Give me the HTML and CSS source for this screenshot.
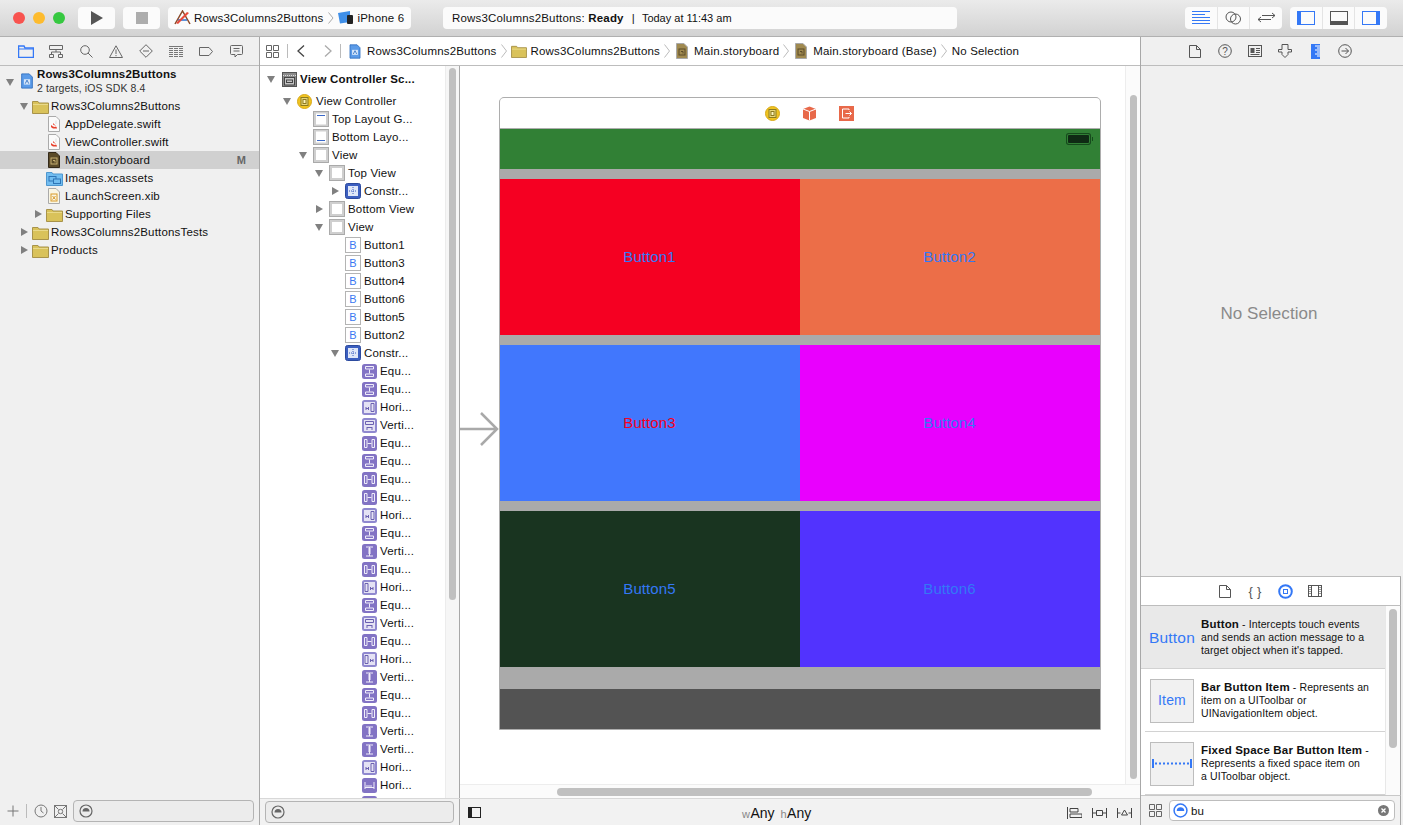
FILE: index.html
```html
<!DOCTYPE html>
<html lang="en">
<head>
    <meta charset="UTF-8" />
    <meta name="viewport" content="width=device-width, initial-scale=1.0" />
    <title>Rows3Columns2Buttons — Main.storyboard</title>
    <link rel="stylesheet" href="styles.css">
</head>
<body>
    <svg class="sprites" aria-hidden="true">
        <symbol id="i-proj" viewBox="0 0 14 18"><path d="M1 1h8.500l3.500 3.500v12.500h-12z" fill="#5b9be8" stroke="#2f6fc0"/><rect x="3.500" y="7" width="7" height="6" fill="#d7e7fa"/><path d="M5 12l2-4 2 4" fill="none" stroke="#2f6fc0"/></symbol>
        <symbol id="i-folder" viewBox="0 0 17 15"><path d="M.5 2.500h5.500l1 1.500h9.500v10.500h-16z" fill="#d9c25a" stroke="#a8934a"/><path d="M1 5.500h15" stroke="#e9d98a"/></symbol>
        <symbol id="i-swift" viewBox="0 0 12 16"><path d="M.5.500h7.500l3.500 3.500v11.500h-11z" fill="#fafafa" stroke="#aaa"/><path d="M8 4.500v3.500" stroke="#ddd"/><path d="M3 9c2 2 4 2.500 5 1.500 1 1 1 1.500 1 2-1-.5-4 1-6-1.500z" fill="#e8402c"/><path d="M5 7l3 3-3-1.500z" fill="#e8402c"/></symbol>
        <symbol id="i-story" viewBox="0 0 12 16"><path d="M.5.500h7.500l3.500 3.500v11.500h-11z" fill="#5a4a28" stroke="#33291a"/><rect x="3" y="6" width="6" height="6" fill="none" stroke="#c8b070"/><path d="M5 8.500h2v2" fill="none" stroke="#c8b070"/></symbol>
        <symbol id="i-story-lt" viewBox="0 0 12 16"><path d="M.5.500h7.500l3.500 3.500v11.500h-11z" fill="#a08a50" stroke="#a9a9a9"/><rect x="3" y="6" width="6" height="6" fill="none" stroke="#5a4a28"/><path d="M5 8.500h2v2" fill="none" stroke="#5a4a28"/></symbol>
        <symbol id="i-assets" viewBox="0 0 17 15"><path d="M.5 1.500h5.500l1 1.500h9.500v11.500h-16z" fill="#72bdf0" stroke="#4f97cf"/><rect x="3" y="5.500" width="7" height="4.500" fill="none" stroke="#2e75b6"/><rect x="7.500" y="8" width="7" height="4.500" fill="#72bdf0" stroke="#2e75b6"/></symbol>
        <symbol id="i-xib" viewBox="0 0 12 16"><path d="M.5.500h7.500l3.500 3.500v11.500h-11z" fill="#faf6e4" stroke="#aaa"/><rect x="3" y="6" width="6" height="7" fill="none" stroke="#d89a28"/><path d="M4.500 8l3 3.500m0-3.500l-3 3.500" stroke="#d89a28"/></symbol>
        <symbol id="i-scene" viewBox="0 0 15 15"><rect x=".5" y=".5" width="14" height="14" fill="#8a8a8a" stroke="#555"/><path d="M1 3.500h13" stroke="#ddd" stroke-dasharray="1 1"/><rect x="2.500" y="5.500" width="10" height="7.500" fill="#c4c4c4" stroke="#444"/><rect x="4.500" y="8" width="6" height="2.500" fill="none" stroke="#444"/></symbol>
        <symbol id="i-vc" viewBox="0 0 15 15"><circle cx="7.500" cy="7.500" r="7" fill="#f0c421" stroke="#d8a818"/><rect x="4" y="3.500" width="7" height="8" fill="#e8d67a" stroke="#8c7a20"/><rect x="6" y="5.500" width="3" height="4" fill="#fff6c0" stroke="#8c7a20"/></symbol>
        <symbol id="i-top" viewBox="0 0 16 16"><rect x=".5" y=".5" width="15" height="15" fill="#cfcfcf" stroke="#aaa"/><rect x="3" y="2.500" width="10" height="11" fill="#fff"/><path d="M4 4.500h8" stroke="#3a68c8"/></symbol>
        <symbol id="i-bottom" viewBox="0 0 16 16"><rect x=".5" y=".5" width="15" height="15" fill="#cfcfcf" stroke="#aaa"/><rect x="3" y="2.500" width="10" height="11" fill="#fff"/><path d="M4 11.500h8" stroke="#3a68c8"/></symbol>
        <symbol id="i-view" viewBox="0 0 16 16"><rect x=".5" y=".5" width="15" height="15" fill="#cfcfcf" stroke="#aaa"/><rect x="3" y="3" width="10" height="10" fill="#fff"/></symbol>
        <symbol id="i-constr" viewBox="0 0 16 16"><rect x=".5" y=".5" width="15" height="15" rx="2" fill="#3c5fc0" stroke="#2c4a9e"/><rect x="3" y="3" width="10" height="10" fill="#dfe7f8"/><path d="M8 4v8M4 8h8" stroke="#3c5fc0" stroke-dasharray="1 1"/></symbol>
        <symbol id="i-btn" viewBox="0 0 16 16"><rect x=".5" y=".5" width="15" height="15" fill="#fff" stroke="#b4b4b4"/><text x="8" y="12" text-anchor="middle" font-size="11" font-family="Liberation Sans" fill="#3a78f2">B</text></symbol>
        <symbol id="c-eqv" viewBox="0 0 15 15"><rect width="15" height="15" rx="2.500" fill="#8273c4"/><path d="M3.500 2.500h8v2.500h-8zM3.500 10h8v2.500h-8z" fill="none" stroke="#f0eefa"/><path d="M7.500 5.500v4" stroke="#f0eefa"/></symbol>
        <symbol id="c-eqh" viewBox="0 0 15 15"><rect width="15" height="15" rx="2.500" fill="#8273c4"/><path d="M2.500 3.500h2.500v8h-2.500zM10 3.500h2.500v8h-2.500z" fill="none" stroke="#f0eefa"/><path d="M5.500 7.500h4" stroke="#f0eefa"/></symbol>
        <symbol id="c-hori" viewBox="0 0 15 15"><rect width="15" height="15" rx="2.500" fill="#8f88cf"/><rect x="2" y="2" width="11" height="11" fill="#e4e2f4"/><path d="M9 3.500h3v8h-3zM4 7v3M6.500 7v3M4 8.500h3" fill="none" stroke="#6a60b0"/></symbol>
        <symbol id="c-hori2" viewBox="0 0 15 15"><rect width="15" height="15" rx="2.500" fill="#8f88cf"/><rect x="2" y="2" width="11" height="11" fill="#e4e2f4"/><path d="M3 3.500h3v8h-3zM8.500 7v3M11 7v3M8 8.500h3" fill="none" stroke="#6a60b0"/></symbol>
        <symbol id="c-vert" viewBox="0 0 15 15"><rect width="15" height="15" rx="2.500" fill="#8f88cf"/><rect x="2" y="2" width="11" height="11" fill="#e4e2f4"/><path d="M3.500 3.500h8v3h-8zM5 9v3M10 9v3M5 9.500h5" fill="none" stroke="#6a60b0"/></symbol>
        <symbol id="c-vbar" viewBox="0 0 15 15"><rect width="15" height="15" rx="2.500" fill="#8273c4"/><path d="M4 3h7M4 12h7M7.500 3v9M6 5h3M6 7h3M6 9h3" stroke="#f0eefa"/></symbol>
        <symbol id="c-hbar" viewBox="0 0 15 15"><rect width="15" height="15" rx="2.500" fill="#8273c4"/><path d="M3 4v7M12 4v7M3 9.500h9M5 7v2M7 7v2M9 7v2" fill="none" stroke="#f0eefa"/></symbol>
        <symbol id="i-filter" viewBox="0 0 14 14"><circle cx="7" cy="7" r="6" fill="none" stroke="#666" stroke-width="1.200"/><path d="M3.500 7.500a3.500 3.500 0 0 1 7 0z" fill="#666"/></symbol>
    </svg>

    <header class="toolbar">
        <span class="light red"></span>
        <span class="light yellow"></span>
        <span class="light green"></span>
        <button class="tb-btn play"><svg width="12" height="14" viewBox="0 0 12 14"><path d="M0 0l12 7-12 7z" fill="#555"/></svg></button>
        <button class="tb-btn stop"><span class="stop-sq"></span></button>
        <div class="scheme">
            <svg class="app-icon" width="17" height="15" viewBox="0 0 17 15"><path d="M1 14L8.500 1 16 14" fill="none" stroke="#8a4a2a" stroke-width="1.500"/><path d="M4 10h9" stroke="#2b6fd0" stroke-width="1.500"/><path d="M2 13l11-11 2 1-11 11z" fill="#e84a3a"/></svg>
            <span>Rows3Columns2Buttons</span>
            <svg class="scheme-chev" width="6" height="12" viewBox="0 0 6 12"><path d="M.5.500l4.500 5.500-4.500 5.500" fill="none" stroke="#aaa"/></svg>
            <svg class="sim-icon" width="16" height="13" viewBox="0 0 16 13"><path d="M0 2l12-2v11l-10 1.500z" fill="#3f8fe8"/><rect x="9" y="4" width="6" height="9" rx="1" fill="#222"/></svg>
            <span>iPhone 6</span>
        </div>
        <div class="activity">
            <span>Rows3Columns2Buttons: <b>Ready</b></span>
            <span class="pipe">|</span>
            <span class="when">Today at 11:43 am</span>
        </div>
        <div class="seg editors">
            <button class="seg-btn"><svg width="18" height="13" viewBox="0 0 18 13"><path d="M0 .5h18M0 3.500h13M0 6.500h18M0 9.500h18M0 12.500h18" stroke="#3478f6"/></svg></button>
            <button class="seg-btn"><svg width="17" height="14" viewBox="0 0 17 14"><circle cx="6" cy="6" r="5" fill="none" stroke="#555"/><circle cx="10.500" cy="8" r="5" fill="none" stroke="#555"/></svg></button>
            <button class="seg-btn"><svg width="19" height="13" viewBox="0 0 19 13"><path d="M5 4.500h13M15 2l3 2.500-3 2.500M14 8.500h-13M4 6l-3 2.500 3 2.500" fill="none" stroke="#555"/></svg></button>
        </div>
        <div class="seg panes">
            <button class="seg-btn"><svg width="18" height="14" viewBox="0 0 18 14"><rect x=".5" y=".5" width="17" height="13" fill="none" stroke="#3478f6"/><rect x="1" y="1" width="3" height="12" fill="#3478f6"/></svg></button>
            <button class="seg-btn"><svg width="18" height="14" viewBox="0 0 18 14"><rect x=".5" y=".5" width="17" height="13" fill="none" stroke="#555"/><rect x="1" y="10" width="16" height="3" fill="#555"/></svg></button>
            <button class="seg-btn"><svg width="18" height="14" viewBox="0 0 18 14"><rect x=".5" y=".5" width="17" height="13" fill="none" stroke="#3478f6"/><rect x="14" y="1" width="3" height="12" fill="#3478f6"/></svg></button>
        </div>
    </header>

    <div class="workspace">
        <aside class="navigator">
            <div class="tabbar nav-tabs">
                <svg width="16" height="13" viewBox="0 0 16 13"><path d="M.5 1h5.500l1 2h8.500v9.500h-15z" fill="none" stroke="#3478f6" stroke-width="1.500"/><path d="M1 4h14" stroke="#3478f6"/></svg>
                <svg width="14" height="13" viewBox="0 0 14 13"><path d="M.5.500h13v4h-13zM.5 9.500h4v3h-4zM9.500 9.500h4v3h-4zM2.500 9.500v-2.500h9v2.500M7 4.500v2.500" fill="none" stroke="#666"/></svg>
                <svg width="13" height="13" viewBox="0 0 13 13"><circle cx="5" cy="5" r="4.300" fill="none" stroke="#666"/><path d="M8 8l4.500 4.500" stroke="#666"/></svg>
                <svg width="14" height="13" viewBox="0 0 14 13"><path d="M7 .8l6.500 11.700h-13z" fill="none" stroke="#666"/><path d="M7 4.500v4.500M7 10v1.200" stroke="#666"/></svg>
                <svg width="14" height="14" viewBox="0 0 14 14"><path d="M7 .7l6.300 6.300-6.300 6.300-6.300-6.300zM4 7h6" fill="none" stroke="#666"/></svg>
                <svg width="14" height="11" viewBox="0 0 14 11"><path d="M0 .5h14M0 2.500h14M0 4.500h14M0 6.500h14M0 8.500h14M0 10.500h14" stroke="#777"/><path d="M4.500 2v9M9.500 2v9" stroke="#f0f0f0"/></svg>
                <svg width="14" height="9" viewBox="0 0 14 9"><path d="M.5.500h9.500l3.500 4-3.500 4h-9.500z" fill="none" stroke="#666"/></svg>
                <svg width="13" height="13" viewBox="0 0 13 13"><path d="M1.500.5h10a1 1 0 0 1 1 1v7a1 1 0 0 1-1 1h-4l-2.500 2.500v-2.500h-3.500a1 1 0 0 1-1-1v-7a1 1 0 0 1 1-1zM3.500 3.500h6M3.500 6h6" fill="none" stroke="#666"/></svg>
            </div>
            <div class="file-tree">
                <div class="file-row root">
                    <span class="twist open"></span>
                    <svg class="root-icon"><use href="#i-proj"/></svg>
                    <div class="root-label"><b>Rows3Columns2Buttons</b><span>2 targets, iOS SDK 8.4</span></div>
                </div>
                <div class="file-row lv1"><span class="twist open"></span><svg class="ficon folder"><use href="#i-folder"/></svg>Rows3Columns2Buttons</div>
                <div class="file-row lv2"><span class="twist"></span><svg class="ficon leaf"><use href="#i-swift"/></svg>AppDelegate.swift</div>
                <div class="file-row lv2"><span class="twist"></span><svg class="ficon leaf"><use href="#i-swift"/></svg>ViewController.swift</div>
                <div class="file-row lv2 selected"><span class="twist"></span><svg class="ficon leaf"><use href="#i-story"/></svg>Main.storyboard<span class="badge">M</span></div>
                <div class="file-row lv2"><span class="twist"></span><svg class="ficon folder"><use href="#i-assets"/></svg>Images.xcassets</div>
                <div class="file-row lv2"><span class="twist"></span><svg class="ficon leaf"><use href="#i-xib"/></svg>LaunchScreen.xib</div>
                <div class="file-row lv2"><span class="twist shut"></span><svg class="ficon folder"><use href="#i-folder"/></svg>Supporting Files</div>
                <div class="file-row lv1"><span class="twist shut"></span><svg class="ficon folder"><use href="#i-folder"/></svg>Rows3Columns2ButtonsTests</div>
                <div class="file-row lv1"><span class="twist shut"></span><svg class="ficon folder"><use href="#i-folder"/></svg>Products</div>
            </div>
            <div class="filter-bar nav-filter">
                <svg width="12" height="12" viewBox="0 0 12 12"><path d="M6 .5v11M.5 6h11" stroke="#777"/></svg>
                <span class="vsep"></span>
                <svg width="14" height="14" viewBox="0 0 14 14"><circle cx="7" cy="7" r="6" fill="none" stroke="#777"/><path d="M7 3v4l2.500 2" fill="none" stroke="#777"/></svg>
                <svg class="recent" width="13" height="13" viewBox="0 0 13 13"><rect x=".5" y=".5" width="12" height="12" fill="none" stroke="#777"/><path d="M1 1l3.500 3.500M12 1l-3.500 3.500M1 12l3.500-3.500M12 12l-3.500-3.500" stroke="#777"/><circle cx="6.500" cy="6.500" r="2.200" fill="none" stroke="#777"/></svg>
                <div class="filter-field"><svg width="14" height="14"><use href="#i-filter"/></svg></div>
            </div>
        </aside>

        <section class="editor">
            <div class="jumpbar">
                <svg class="jb-grid" width="13" height="13" viewBox="0 0 13 13"><path d="M.5.500h5v5h-5zM7.500.500h5v5h-5zM.5 7.500h5v5h-5zM7.500 7.500h5v5h-5z" fill="none" stroke="#666"/></svg>
                <span class="vsep"></span>
                <svg class="jb-back" width="8" height="12" viewBox="0 0 8 12"><path d="M7 .5l-6 5.500 6 5.500" fill="none" stroke="#444" stroke-width="1.300"/></svg>
                <svg class="jb-fwd" width="8" height="12" viewBox="0 0 8 12"><path d="M1 .5l6 5.500-6 5.500" fill="none" stroke="#aaa" stroke-width="1.300"/></svg>
                <span class="vsep"></span>
                <svg class="crumb-icon doc" width="12" height="15"><use href="#i-proj"/></svg>
                <span>Rows3Columns2Buttons</span>
                <svg class="chev" width="6" height="14" viewBox="0 0 6 14"><path d="M.5.500l5 6.500-5 6.500" fill="none" stroke="#bbb"/></svg>
                <svg class="crumb-icon fold" width="16" height="14"><use href="#i-folder"/></svg>
                <span>Rows3Columns2Buttons</span>
                <svg class="chev" width="6" height="14" viewBox="0 0 6 14"><path d="M.5.500l5 6.500-5 6.500" fill="none" stroke="#bbb"/></svg>
                <svg class="crumb-icon" width="12" height="16"><use href="#i-story-lt"/></svg>
                <span>Main.storyboard</span>
                <svg class="chev" width="6" height="14" viewBox="0 0 6 14"><path d="M.5.500l5 6.500-5 6.500" fill="none" stroke="#bbb"/></svg>
                <svg class="crumb-icon" width="12" height="16"><use href="#i-story-lt"/></svg>
                <span>Main.storyboard (Base)</span>
                <svg class="chev" width="6" height="14" viewBox="0 0 6 14"><path d="M.5.500l5 6.500-5 6.500" fill="none" stroke="#bbb"/></svg>
                <span class="last-crumb">No Selection</span>
            </div>
            <div class="editor-body">
                <div class="outline">
                    <div class="outline-list">
                        <div class="o-row scene ol0"><span class="twist open"></span><svg class="oicon"><use href="#i-scene"/></svg><b>View Controller Sc...</b></div>
                        <div class="o-row ol1"><span class="twist open"></span><svg class="oicon"><use href="#i-vc"/></svg>View Controller</div>
                        <div class="o-row ol2"><span class="twist"></span><svg class="oicon"><use href="#i-top"/></svg>Top Layout G...</div>
                        <div class="o-row ol2"><span class="twist"></span><svg class="oicon"><use href="#i-bottom"/></svg>Bottom Layo...</div>
                        <div class="o-row ol2"><span class="twist open"></span><svg class="oicon"><use href="#i-view"/></svg>View</div>
                        <div class="o-row ol3"><span class="twist open"></span><svg class="oicon"><use href="#i-view"/></svg>Top View</div>
                        <div class="o-row ol4"><span class="twist shut"></span><svg class="oicon"><use href="#i-constr"/></svg>Constr...</div>
                        <div class="o-row ol3"><span class="twist shut"></span><svg class="oicon"><use href="#i-view"/></svg>Bottom View</div>
                        <div class="o-row ol3"><span class="twist open"></span><svg class="oicon"><use href="#i-view"/></svg>View</div>
                        <div class="o-row ol4"><span class="twist"></span><svg class="oicon"><use href="#i-btn"/></svg>Button1</div>
                        <div class="o-row ol4"><span class="twist"></span><svg class="oicon"><use href="#i-btn"/></svg>Button3</div>
                        <div class="o-row ol4"><span class="twist"></span><svg class="oicon"><use href="#i-btn"/></svg>Button4</div>
                        <div class="o-row ol4"><span class="twist"></span><svg class="oicon"><use href="#i-btn"/></svg>Button6</div>
                        <div class="o-row ol4"><span class="twist"></span><svg class="oicon"><use href="#i-btn"/></svg>Button5</div>
                        <div class="o-row ol4"><span class="twist"></span><svg class="oicon"><use href="#i-btn"/></svg>Button2</div>
                        <div class="o-row ol4"><span class="twist open"></span><svg class="oicon"><use href="#i-constr"/></svg>Constr...</div>
                        <div class="o-row ol5"><svg class="oicon"><use href="#c-eqv"/></svg>Equ...</div>
                        <div class="o-row ol5"><svg class="oicon"><use href="#c-eqv"/></svg>Equ...</div>
                        <div class="o-row ol5"><svg class="oicon"><use href="#c-hori"/></svg>Hori...</div>
                        <div class="o-row ol5"><svg class="oicon"><use href="#c-vert"/></svg>Verti...</div>
                        <div class="o-row ol5"><svg class="oicon"><use href="#c-eqh"/></svg>Equ...</div>
                        <div class="o-row ol5"><svg class="oicon"><use href="#c-eqv"/></svg>Equ...</div>
                        <div class="o-row ol5"><svg class="oicon"><use href="#c-eqh"/></svg>Equ...</div>
                        <div class="o-row ol5"><svg class="oicon"><use href="#c-eqh"/></svg>Equ...</div>
                        <div class="o-row ol5"><svg class="oicon"><use href="#c-hori"/></svg>Hori...</div>
                        <div class="o-row ol5"><svg class="oicon"><use href="#c-eqv"/></svg>Equ...</div>
                        <div class="o-row ol5"><svg class="oicon"><use href="#c-vbar"/></svg>Verti...</div>
                        <div class="o-row ol5"><svg class="oicon"><use href="#c-eqh"/></svg>Equ...</div>
                        <div class="o-row ol5"><svg class="oicon"><use href="#c-hori2"/></svg>Hori...</div>
                        <div class="o-row ol5"><svg class="oicon"><use href="#c-eqv"/></svg>Equ...</div>
                        <div class="o-row ol5"><svg class="oicon"><use href="#c-vert"/></svg>Verti...</div>
                        <div class="o-row ol5"><svg class="oicon"><use href="#c-eqh"/></svg>Equ...</div>
                        <div class="o-row ol5"><svg class="oicon"><use href="#c-hori2"/></svg>Hori...</div>
                        <div class="o-row ol5"><svg class="oicon"><use href="#c-vbar"/></svg>Verti...</div>
                        <div class="o-row ol5"><svg class="oicon"><use href="#c-eqv"/></svg>Equ...</div>
                        <div class="o-row ol5"><svg class="oicon"><use href="#c-eqh"/></svg>Equ...</div>
                        <div class="o-row ol5"><svg class="oicon"><use href="#c-vbar"/></svg>Verti...</div>
                        <div class="o-row ol5"><svg class="oicon"><use href="#c-vbar"/></svg>Verti...</div>
                        <div class="o-row ol5"><svg class="oicon"><use href="#c-hori"/></svg>Hori...</div>
                        <div class="o-row ol5"><svg class="oicon"><use href="#c-hbar"/></svg>Hori...</div>
                        <div class="o-row ol5"><svg class="oicon"><use href="#c-vbar"/></svg>Verti...</div>
                    </div>
                    <div class="o-scroll"><span class="thumb"></span></div>
                </div>
                <div class="canvas-col">
                    <div class="canvas-wrap">
                        <div class="canvas">
                            <svg class="entry-arrow" width="39" height="34" viewBox="0 0 39 34"><path d="M0 17h37M21 1l16 16-16 16" fill="none" stroke="#a9a9a9" stroke-width="2.500"/></svg>
                            <div class="scene-box">
                                <div class="scene-head">
                                    <svg width="15" height="15"><use href="#i-vc"/></svg>
                                    <svg width="15" height="15" viewBox="0 0 15 15"><path d="M7.500.5l6.500 2.500v9l-6.500 2.500-6.500-2.500v-9z" fill="#e8694a"/><path d="M1 3l6.500 2.500 6.500-2.500M7.500 5.500v9" fill="none" stroke="#fff"/></svg>
                                    <svg width="15" height="15" viewBox="0 0 15 15"><rect width="15" height="15" fill="#e8694a"/><path d="M10 4v-1h-6.500v9h6.500v-1M6.500 7.500h6M10.500 5.500l2 2-2 2" fill="none" stroke="#fff"/></svg>
                                </div>
                                <div class="status-strip"><span class="battery"></span></div>
                                <div class="btn-rows">
                                    <div class="btn-row">
                                        <div class="ui-btn b1">Button1</div>
                                        <div class="ui-btn b2">Button2</div>
                                    </div>
                                    <div class="btn-row">
                                        <div class="ui-btn b3">Button3</div>
                                        <div class="ui-btn b4">Button4</div>
                                    </div>
                                    <div class="btn-row">
                                        <div class="ui-btn b5">Button5</div>
                                        <div class="ui-btn b6">Button6</div>
                                    </div>
                                </div>
                                <div class="bottom-strip"></div>
                            </div>
                        </div>
                        <div class="v-scroll"><span class="thumb"></span></div>
                    </div>
                    <div class="h-scroll"><span class="thumb"></span></div>
                </div>
            </div>
            <div class="editor-foot">
                <div class="foot-outline"><div class="filter-field"><svg width="14" height="14"><use href="#i-filter"/></svg></div></div>
                <div class="foot-canvas">
                    <svg width="13" height="11" viewBox="0 0 13 11"><rect x=".5" y=".5" width="12" height="10" fill="none" stroke="#222"/><rect x="1" y="1" width="3" height="9" fill="#222"/></svg>
                    <div class="size-class"><span class="dim">w</span>Any <span class="dim gap">h</span>Any</div>
                    <div class="foot-tools">
                        <svg width="15" height="12" viewBox="0 0 15 12"><path d="M.5 0v12M3 1.500h8v3.500h-8zM3 7h12v3.500h-12z" fill="none" stroke="#444"/></svg>
                        <svg width="15" height="12" viewBox="0 0 15 12"><path d="M.5 1v10M14.500 1v10M.5 6h4M10.500 6h4M4.500 3.500h6v5h-6z" fill="none" stroke="#444"/></svg>
                        <svg width="15" height="12" viewBox="0 0 15 12"><path d="M.5 1v10M14.500 1v10M.5 6h3M11.500 6h3M7.500 3l3 5h-6z" fill="none" stroke="#444"/></svg>
                    </div>
                </div>
            </div>
        </section>

        <aside class="inspector">
            <div class="tabbar insp-tabs">
                <svg width="12" height="13" viewBox="0 0 12 13"><path d="M.5.500h7l4 4v8h-11zM7.500.500v4h4" fill="none" stroke="#555"/></svg>
                <svg width="14" height="14" viewBox="0 0 14 14"><circle cx="7" cy="7" r="6.300" fill="none" stroke="#555"/><text x="7" y="10.500" text-anchor="middle" font-size="10" font-family="Liberation Sans" fill="#555">?</text></svg>
                <svg width="14" height="12" viewBox="0 0 14 12"><rect x=".5" y=".5" width="13" height="11" fill="none" stroke="#555"/><rect x="2.500" y="3" width="4" height="5" fill="#555"/><path d="M8 3.500h4M8 5.500h4M8 7.500h4M2.500 9.500h9" stroke="#555"/></svg>
                <svg width="14" height="14" viewBox="0 0 14 14"><path d="M4 .5h6v5h3.500v2.500h-3.500v2.500l-3 3-3-3v-2.500h-3.500v-2.500h3.500z" fill="none" stroke="#555"/></svg>
                <svg width="9" height="15" viewBox="0 0 9 15"><rect width="9" height="15" fill="#3478f6"/><path d="M4 2h5M6 4h3M4 6h5M6 8h3M4 10h5M6 12h3" stroke="#fff"/></svg>
                <svg width="14" height="14" viewBox="0 0 14 14"><circle cx="7" cy="7" r="6.300" fill="none" stroke="#555"/><path d="M3.500 7h7M7.500 4l3 3-3 3" fill="none" stroke="#555"/></svg>
            </div>
            <div class="insp-empty">No Selection</div>
            <div class="lib-tabs">
                <svg width="12" height="13" viewBox="0 0 12 13"><path d="M.5.500h7l4 4v8h-11zM7.500.500v4h4" fill="none" stroke="#555"/></svg>
                <span class="braces">{ }</span>
                <svg width="15" height="15" viewBox="0 0 15 15"><circle cx="7.500" cy="7.500" r="6.300" fill="none" stroke="#3478f6" stroke-width="2"/><rect x="5.500" y="5.500" width="4" height="4" fill="none" stroke="#3478f6"/></svg>
                <svg width="14" height="12" viewBox="0 0 14 12"><rect x=".5" y=".5" width="13" height="11" fill="none" stroke="#555"/><path d="M3.500 1v10M10.500 1v10" stroke="#555"/><path d="M1 2.500h2M1 4.500h2M1 6.500h2M1 8.500h2M11 2.500h2M11 4.500h2M11 6.500h2M11 8.500h2" stroke="#999"/></svg>
            </div>
            <div class="lib-body">
                <div class="lib-list">
                    <div class="lib-item active">
                        <div class="lib-thumb plain">Button</div>
                        <p><b>Button</b> - Intercepts touch events<br>and sends an action message to a<br>target object when it's tapped.</p>
                    </div>
                    <div class="lib-item">
                        <div class="lib-thumb boxed">Item</div>
                        <p><b>Bar Button Item</b> - Represents an<br>item on a UIToolbar or<br>UINavigationItem object.</p>
                    </div>
                    <div class="lib-item">
                        <div class="lib-thumb boxed"><svg width="40" height="9" viewBox="0 0 40 9"><path d="M1 0v9M39 0v9" stroke="#3478f6" stroke-width="2"/><path d="M3 4.500h34" stroke="#3478f6" stroke-width="2" stroke-dasharray="2 2"/></svg></div>
                        <p><b>Fixed Space Bar Button Item</b> -<br>Represents a fixed space item on<br>a UIToolbar object.</p>
                    </div>
                </div>
                <div class="lib-scroll"><span class="thumb"></span></div>
            </div>
            <div class="lib-search">
                <svg width="13" height="13" viewBox="0 0 13 13"><path d="M.5.500h5v5h-5zM7.500.500h5v5h-5zM.5 7.500h5v5h-5zM7.500 7.500h5v5h-5z" fill="none" stroke="#666"/></svg>
                <div class="search-field">
                    <svg width="15" height="15" viewBox="0 0 14 14"><circle cx="7" cy="7" r="6" fill="none" stroke="#3478f6" stroke-width="1.400"/><path d="M3.500 7.500a3.500 3.500 0 0 1 7 0z" fill="#3478f6"/></svg>
                    <span class="query">bu</span>
                    <svg class="clear" width="11" height="11" viewBox="0 0 11 11"><circle cx="5.500" cy="5.500" r="5.500" fill="#777"/><path d="M3.500 3.500l4 4M7.500 3.500l-4 4" stroke="#fff" stroke-width="1.300"/></svg>
                </div>
            </div>
        </aside>
    </div>
</body>
</html>
```

FILE: styles.css
```css
* {
    box-sizing: border-box;
}
html, body {
    height: 825px;
}
body {
    margin: 0;
    font-family: "Liberation Sans", Arial, sans-serif;
    font-size: 11.5px;
    letter-spacing: .18px;
    color: #111;
    background: #f0f0f0;
    display: flex;
    flex-direction: column;
    overflow: hidden;
}
svg {
    display: block;
    flex: none;
}
b {
    font-weight: 700;
}
.sprites {
    width: 0;
    height: 0;
    position: absolute;
}

/* toolbar */
.toolbar {
    height: 37px;
    flex: none;
    display: flex;
    align-items: center;
    padding: 0 0 1px 13px;
    background: linear-gradient(#ebebeb, #d2d2d2);
    border-bottom: 1px solid #b0b0b0;
}
.light {
    width: 12px;
    height: 12px;
    border-radius: 50%;
    margin-right: 8px;
}
.red { background: #f8534f; }
.yellow { background: #fdbb2e; }
.green { background: #36c840; }
.tb-btn {
    width: 37px;
    height: 22px;
    border: none;
    border-radius: 4px;
    background: #fbfbfb;
    padding: 0;
    display: flex;
    align-items: center;
    justify-content: center;
}
.play {
    margin-left: 5px;
}
.stop {
    margin-left: 8px;
}
.stop-sq {
    width: 12px;
    height: 12px;
    background: #adadad;
}
.scheme {
    width: 243px;
    height: 22px;
    margin-left: 8px;
    background: #fbfbfb;
    border-radius: 4px;
    display: flex;
    align-items: center;
    padding-left: 6px;
}
.app-icon {
    margin-right: 3px;
}
.scheme-chev {
    margin: 0 4px;
}
.sim-icon {
    margin-right: 4px;
}
.activity {
    width: 514px;
    height: 22px;
    margin-left: 32px;
    background: #fbfbfb;
    border-radius: 4px;
    display: flex;
    align-items: center;
    padding-left: 9px;
}
.pipe {
    margin: 0 7px 0 8px;
}
.when {
    font-size: 11px;
    letter-spacing: 0;
}
.seg {
    width: 97px;
    height: 22px;
    background: #fbfbfb;
    border-radius: 4px;
    display: flex;
}
.editors {
    margin-left: 228px;
}
.panes {
    margin-left: 8px;
}
.seg-btn {
    flex: 1;
    border: none;
    background: none;
    padding: 0;
    display: flex;
    align-items: center;
    justify-content: center;
    border-left: 1px solid #e4e4e4;
}
.seg-btn:first-child {
    border-left: none;
}

/* three panes */
.workspace {
    flex: 1;
    display: flex;
    min-height: 0;
}
.navigator {
    width: 260px;
    flex: none;
    display: flex;
    flex-direction: column;
    background: #f0f0f0;
    border-right: 1px solid #a8a8a8;
}
.tabbar {
    height: 29px;
    flex: none;
    display: grid;
    grid-template-columns: repeat(8, 30px);
    justify-items: center;
    align-items: center;
    border-bottom: 1px solid #bdbdbd;
}
.nav-tabs {
    padding-left: 11px;
}
.file-tree {
    flex: 1;
}
.file-row {
    height: 18px;
    display: flex;
    align-items: center;
    white-space: nowrap;
}
.file-row.root {
    height: 31px;
    padding: 1px 0 0 5px;
    align-items: flex-start;
}
.root .twist {
    align-self: center;
}
.root-icon {
    width: 14px;
    height: 16px;
    margin: 6px 3px 0 3px;
}
.root-label {
    display: flex;
    flex-direction: column;
    line-height: 14px;
}
.root-label span {
    color: #333;
    font-size: 10.5px;
    letter-spacing: .1px;
}
.lv1 {
    padding-left: 19px;
}
.lv2 {
    padding-left: 33px;
}
.twist {
    width: 12px;
    height: 12px;
    flex: none;
    position: relative;
}
.twist.open::after {
    content: "";
    position: absolute;
    left: 1px;
    top: 3px;
    border-left: 4.5px solid transparent;
    border-right: 4.5px solid transparent;
    border-top: 7px solid #808080;
}
.twist.shut::after {
    content: "";
    position: absolute;
    left: 2px;
    top: 1.5px;
    border-top: 4.5px solid transparent;
    border-bottom: 4.5px solid transparent;
    border-left: 7px solid #808080;
}
.ficon.folder {
    width: 17px;
    height: 15px;
    margin: 0 2px 0 1px;
}
.ficon.leaf {
    width: 12px;
    height: 16px;
    margin: 0 5px 0 3px;
}
.selected {
    background: #d0d0d0;
}
.badge {
    margin-left: auto;
    margin-right: 13px;
    font-size: 11px;
    font-weight: 700;
    color: #666;
}
.filter-bar {
    height: 28px;
    flex: none;
    display: flex;
    align-items: center;
    padding: 0 5px 0 7px;
    gap: 7px;
}
.vsep {
    width: 1px;
    height: 14px;
    background: #bbb;
    flex: none;
}
.recent {
    margin-left: -1px;
}
.nav-filter .filter-field {
    margin-left: -1px;
}
.filter-field {
    height: 22px;
    flex: 1;
    display: flex;
    align-items: center;
    padding-left: 5px;
    border: 1px solid #b4b4b4;
    border-radius: 4px;
    background: #ececec;
}

/* editor */
.editor {
    flex: 1;
    min-width: 0;
    display: flex;
    flex-direction: column;
    background: #fff;
}
.jumpbar {
    height: 29px;
    flex: none;
    display: flex;
    align-items: center;
    padding-left: 6px;
    background: #fff;
    border-bottom: 1px solid #bdbdbd;
    white-space: nowrap;
}
.jb-grid {
    margin-right: 8px;
}
.jb-back {
    margin-left: 9px;
}
.jb-fwd {
    margin-left: 19px;
}
.jb-fwd + .vsep {
    margin-left: 8px;
}
.crumb-icon {
    margin: 0 6px;
}
.crumb-icon.doc {
    margin: 0 6px 0 8px;
}
.crumb-icon.fold {
    margin: 0 4px;
}
.chev {
    margin-left: 4px;
}
.last-crumb {
    margin-left: 5px;
}
.editor-body {
    flex: 1;
    min-height: 0;
    display: flex;
}
.outline {
    width: 200px;
    flex: none;
    display: flex;
    border-right: 1px solid #a8a8a8;
}
.outline-list {
    flex: 1;
    min-width: 0;
    overflow: hidden;
    padding-top: 3px;
}
.o-row {
    height: 18px;
    display: flex;
    align-items: center;
    white-space: nowrap;
}
.o-row.scene {
    height: 20px;
    margin-bottom: 3px;
}
.ol0 { padding-left: 6px; }
.ol1 { padding-left: 22px; }
.ol2 { padding-left: 38px; }
.ol3 { padding-left: 54px; }
.ol4 { padding-left: 70px; }
.ol5 { padding-left: 102px; }
.oicon {
    width: 15px;
    height: 15px;
}
.ol0 .oicon {
    margin: 0 3px 0 4px;
}
.ol1 .oicon {
    margin: 0 4px 0 3px;
}
.ol2 .oicon, .ol3 .oicon, .ol4 .oicon {
    width: 16px;
    height: 16px;
    margin: 0 3px;
}
.ol5 .oicon {
    margin: 0 3px 0 0;
}
.o-scroll {
    width: 14px;
    flex: none;
    padding: 2px 3px;
    background: #f6f6f6;
    border-left: 1px solid #ececec;
}
.o-scroll .thumb {
    height: 532px;
}
.thumb {
    display: block;
    background: #c0c0c0;
    border-radius: 4px;
}
.canvas-col {
    flex: 1;
    min-width: 0;
    display: flex;
    flex-direction: column;
}
.canvas-wrap {
    flex: 1;
    min-height: 0;
    display: flex;
}
.canvas {
    flex: 1;
    min-width: 0;
    display: flex;
    align-items: flex-start;
    padding-top: 31px;
}
.entry-arrow {
    margin-top: 315px;
}
.scene-box {
    width: 602px;
    height: 633px;
    flex: none;
    display: flex;
    flex-direction: column;
    border: 1px solid #adadad;
    border-radius: 5px 5px 0 0;
    overflow: hidden;
    background: #aaa;
}
.scene-head {
    height: 31px;
    flex: none;
    padding-left: 19px;
    background: #fff;
    border-bottom: 1px solid #adadad;
    display: flex;
    align-items: center;
    justify-content: center;
    gap: 22px;
}
.status-strip {
    height: 40px;
    flex: none;
    background: #318035;
    position: relative;
}
.battery {
    position: absolute;
    top: 6px;
    right: 11px;
    width: 21px;
    height: 8px;
    background: #0f2a14;
    box-shadow: 0 0 0 1px #318035, 0 0 0 2px #164a1c;
    border-radius: 1px;
}
.battery::after {
    content: "";
    position: absolute;
    top: 2px;
    right: -4px;
    width: 1px;
    height: 4px;
    background: #164a1c;
}
.btn-rows {
    flex: none;
    padding-top: 10px;
    display: flex;
    flex-direction: column;
    gap: 10px;
}
.btn-row {
    height: 156px;
    display: flex;
}
.ui-btn {
    width: 50%;
    padding: 0 1px 2px 0;
    display: flex;
    align-items: center;
    justify-content: center;
    font-size: 15px;
    letter-spacing: .1px;
    color: #3478f6;
}
.b1 { background: #f50022; }
.b2 { background: #ec6e48; }
.b3 { background: #4177fd; color: #f50022; }
.b4 { background: #e900fe; }
.b5 { background: #193420; }
.b6 { background: #5233fe; }
.bottom-strip {
    height: 40px;
    margin-top: auto;
    flex: none;
    background: #535353;
}
.v-scroll {
    width: 15px;
    flex: none;
    padding: 29px 3px 3px 4px;
    background: #fbfbfb;
    border-left: 1px solid #ededed;
}
.v-scroll .thumb {
    height: 684px;
}
.h-scroll {
    height: 14px;
    flex: none;
    padding: 3px 0 0 97px;
    background: #fbfbfb;
    border-top: 1px solid #ededed;
}
.h-scroll .thumb {
    width: 535px;
    height: 8px;
}
.editor-foot {
    height: 27px;
    flex: none;
    display: flex;
    background: #f2f2f2;
    border-top: 1px solid #d8d8d8;
}
.foot-outline {
    width: 200px;
    flex: none;
    display: flex;
    align-items: center;
    padding: 0 5px;
    border-right: 1px solid #a8a8a8;
}
.foot-canvas {
    flex: 1;
    display: flex;
    align-items: center;
    padding: 0 8px;
    position: relative;
}
.size-class {
    position: absolute;
    left: 282px;
    margin-top: 1px;
    font-size: 14px;
    letter-spacing: 0;
}
.dim {
    color: #888;
    font-size: 11px;
    letter-spacing: .5px;
}
.dim.gap {
    margin-left: 2px;
}
.foot-tools {
    margin: 1px 0 0 auto;
    display: flex;
    gap: 10px;
}

/* inspector */
.inspector {
    width: 263px;
    flex: none;
    display: flex;
    flex-direction: column;
    background: #f0f0f0;
    border-left: 1px solid #a8a8a8;
}
.insp-tabs {
    padding-left: 39px;
    background: #f0f0f0;
}
.insp-empty {
    height: 510px;
    flex: none;
    display: flex;
    align-items: center;
    justify-content: center;
    font-size: 17px;
    letter-spacing: .05px;
    color: #8a8a8a;
    padding: 0 6px 14px 0;
}
.lib-tabs, .lib-body, .lib-search {
    margin-right: 2px;
    border-right: 1px solid #a8a8a8;
}
.lib-tabs {
    height: 30px;
    flex: none;
    display: grid;
    grid-template-columns: repeat(4, 30px);
    justify-items: center;
    align-items: center;
    padding-left: 69px;
    background: #fff;
    border-top: 1px solid #bdbdbd;
    border-bottom: 1px solid #bdbdbd;
}
.braces {
    font-size: 13px;
    color: #555;
}
.lib-body {
    flex: 1;
    min-height: 0;
    display: flex;
    background: #fff;
}
.lib-list {
    flex: 1;
    min-width: 0;
}
.lib-item {
    height: 63px;
    display: flex;
    align-items: center;
    padding-left: 9px;
    position: relative;
    line-height: 13px;
}
.lib-item::after {
    content: "";
    position: absolute;
    left: 4px;
    right: 0;
    bottom: 0;
    height: 1px;
    background: #d2d2d2;
}
.lib-item.active {
    background: #e9e9e9;
    padding-bottom: 1px;
}
.lib-item.active::after {
    left: 0;
}
.lib-item p {
    margin: 0 0 0 7px;
    font-size: 10.5px;
    letter-spacing: .1px;
    white-space: nowrap;
}
.lib-item b {
    font-size: 11.5px;
    letter-spacing: .17px;
}
.lib-thumb {
    width: 44px;
    height: 44px;
    flex: none;
    display: flex;
    align-items: center;
    justify-content: center;
    color: #3478f6;
}
.lib-thumb.plain {
    font-size: 15.5px;
    white-space: nowrap;
}
.lib-thumb.boxed {
    font-size: 14px;
    background: #f1f1f1;
    border: 1px solid #bdbdbd;
}
.lib-scroll {
    width: 15px;
    flex: none;
    padding: 3px 3px 0 3px;
    background: #fbfbfb;
    border-left: 1px solid #e8e8e8;
}
.lib-scroll .thumb {
    height: 139px;
}
.lib-search {
    height: 30px;
    flex: none;
    display: flex;
    align-items: center;
    gap: 7px;
    padding: 0 5px 0 8px;
    background: #f2f2f2;
    border-top: 1px solid #c8c8c8;
}
.search-field {
    flex: 1;
    height: 21px;
    display: flex;
    align-items: center;
    padding: 0 5px 0 3px;
    background: #fff;
    border: 1px solid #bdbdbd;
    border-radius: 4px;
}
.query {
    margin-left: 3px;
}
.clear {
    margin-left: auto;
}
```
